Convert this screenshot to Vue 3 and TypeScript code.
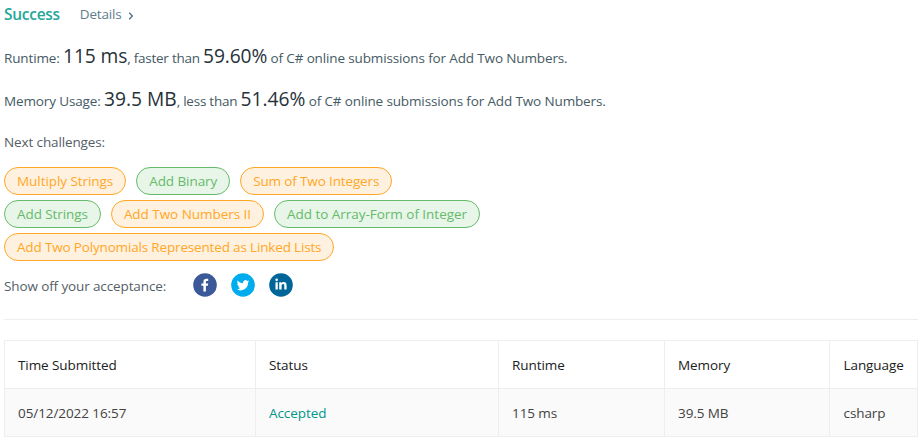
<script setup lang="ts">
interface Challenge {
  title: string
  level: 'medium' | 'easy'
  tracking: number
}

const challenges: Challenge[][] = [
  [
    { title: 'Multiply Strings', level: 'medium', tracking: -0.06 },
    { title: 'Add Binary', level: 'easy', tracking: -0.08 },
    { title: 'Sum of Two Integers', level: 'medium', tracking: -0.14 },
  ],
  [
    { title: 'Add Strings', level: 'easy', tracking: -0.08 },
    { title: 'Add Two Numbers II', level: 'medium', tracking: -0.04 },
    { title: 'Add to Array-Form of Integer', level: 'easy', tracking: -0.03 },
  ],
  [{ title: 'Add Two Polynomials Represented as Linked Lists', level: 'medium', tracking: -0.165 }],
]

const columns: string[] = ['Time Submitted', 'Status', 'Runtime', 'Memory', 'Language']
</script>

<template>
  <main class="result">
    <header class="head">
      <span class="success">Success</span>
      <a class="details">
        <span>Details</span>
        <svg class="chevron" viewBox="0 0 6 8"><path d="M1.2 0.8 4.4 4 1.2 7.2" /></svg>
      </a>
    </header>

    <p class="stat">
      <span class="label">Runtime: </span><span class="value">115 ms</span><span class="compare">, faster than </span><span class="value">59.60%</span><span class="tail"> of C# online submissions for Add Two Numbers.</span>
    </p>
    <p class="stat second">
      <span class="label">Memory Usage: </span><span class="value">39.5 MB</span><span class="compare">, less than </span><span class="value">51.46%</span><span class="tail"> of C# online submissions for Add Two Numbers.</span>
    </p>

    <p class="next">Next challenges:</p>
    <div class="pills">
      <div v-for="(row, i) in challenges" :key="i" class="pill-row">
        <a
          v-for="c in row"
          :key="c.title"
          class="pill"
          :class="c.level"
          :style="{ letterSpacing: c.tracking + 'px' }"
        >{{ c.title }}</a>
      </div>
    </div>

    <div class="share">
      <span class="share-label">Show off your acceptance:</span>
      <svg class="social" viewBox="0 0 24 24">
        <circle cx="12" cy="12" r="11.8" fill="#3b5998" />
        <path fill="#fff" d="M12.900 18.500v-5.800h2l.3-2.300h-2.300V9c0-.7.2-1.100 1.100-1.100h1.200V5.800c-.2 0-.9-.1-1.800-.1-1.800 0-3 1.100-3 3v1.700h-2v2.300h2v5.800z" />
      </svg>
      <svg class="social" viewBox="0 0 24 24">
        <circle cx="12" cy="12" r="11.8" fill="#00aced" />
        <path fill="#fff" d="M18.300 8.300c-.5.2-1 .4-1.500.4.5-.3.9-.8 1.100-1.400-.5.3-1 .5-1.600.6a2.600 2.600 0 0 0-4.400 2.300c-2.100-.1-4-1.100-5.300-2.700-.7 1.200-.3 2.700.8 3.400-.4 0-.8-.1-1.200-.3 0 1.300.9 2.300 2.100 2.600-.4.1-.8.1-1.200 0 .3 1 1.300 1.800 2.400 1.800A5.200 5.200 0 0 1 5.700 16.100a7.300 7.300 0 0 0 11.300-6.500c.5-.3.9-.8 1.300-1.300z" />
      </svg>
      <svg class="social" viewBox="0 0 24 24">
        <circle cx="12" cy="12" r="11.8" fill="#006699" />
        <path fill="#fff" d="M6.500 9.200h2.300v7.300H6.500zM7.650 5.500a1.350 1.350 0 1 1 0 2.700 1.350 1.350 0 0 1 0-2.700zM10.200 9.200h2.200v1c.4-.7 1.200-1.200 2.300-1.200 2.300 0 2.900 1.500 2.900 3.500v4h-2.300v-3.600c0-.9 0-1.900-1.200-1.900s-1.500.9-1.500 1.900v3.600h-2.400z" />
      </svg>
    </div>

    <hr class="rule" />

    <table class="table">
      <colgroup>
        <col class="c-time" /><col class="c-status" /><col class="c-runtime" /><col class="c-memory" /><col class="c-lang" />
      </colgroup>
      <thead>
        <tr><th v-for="name in columns" :key="name">{{ name }}</th></tr>
      </thead>
      <tbody>
        <tr>
          <td>05/12/2022 16:57</td>
          <td class="accepted">Accepted</td>
          <td>115 ms</td>
          <td>39.5 MB</td>
          <td>csharp</td>
        </tr>
      </tbody>
    </table>
  </main>
</template>

<style>
body {
  margin: 0;
  background: #fff;
}
</style>

<style scoped>
.result {
  box-sizing: border-box;
  height: 444px;
  padding: 0 6px 0 4px;
  overflow: hidden;
  font-family: 'Open Sans', 'Noto Sans', sans-serif;
  font-size: 13.5px;
  line-height: 20px;
  color: #546069;
  white-space: nowrap;
}
.head {
  display: flex;
  align-items: center;
  gap: 20px;
  height: 28px;
}
.success {
  font-size: 15.5px;
  font-weight: 600;
  letter-spacing: -0.28px;
  color: #26a69a;
}
.details {
  display: flex;
  align-items: center;
  gap: 8px;
  letter-spacing: -0.2px;
  color: #607d8b;
}
.chevron {
  width: 6px;
  height: 8px;
  margin: 3px 0 0 -1px;
  fill: none;
  stroke: #546e7a;
  stroke-width: 1.3;
}
.stat {
  margin: 13px 0 0;
  height: 29px;
  line-height: 29px;
  color: #455a64;
}
.stat.second {
  margin-top: 14px;
}
.label {
  letter-spacing: -0.13px;
}
.compare {
  letter-spacing: -0.24px;
}
.tail {
  letter-spacing: -0.135px;
}
.value {
  font-size: 19.2px;
  letter-spacing: -0.12px;
  color: #263238;
}
.second .value {
  letter-spacing: 0;
}
.next {
  margin: 19px 0 0;
  height: 20px;
  letter-spacing: -0.12px;
}
.pills {
  display: flex;
  flex-direction: column;
  gap: 5px;
  margin-top: 15px;
}
.pill-row {
  display: flex;
  gap: 10px;
}
.pill {
  box-sizing: border-box;
  height: 28px;
  padding: 0 12px;
  border: 1px solid;
  border-radius: 14px;
  line-height: 26px;
}
.medium {
  color: #ffa726;
  background: #fff1df;
}
.easy {
  color: #66bb6a;
  background: #e8f5e9;
}
.share {
  display: flex;
  align-items: center;
  gap: 14px;
  height: 24px;
  margin-top: 12px;
}
.share-label {
  width: 175px;
  padding-top: 2px;
  letter-spacing: -0.12px;
}
.social {
  width: 24px;
  height: 24px;
}
.rule {
  height: 1px;
  margin: 22px 0 20px;
  border: 0;
  background: #eee;
}
.table {
  width: 914px;
  table-layout: fixed;
  border-collapse: collapse;
  letter-spacing: -0.08px;
}
.c-time { width: 251px; }
.c-status { width: 243px; }
.c-runtime { width: 166px; }
.c-memory { width: 165px; }
.c-lang { width: 88px; }
th,
td {
  box-sizing: border-box;
  height: 48px;
  padding: 1px 0 0 13px;
  border: 1px solid #eee;
  text-align: left;
  font-weight: 400;
}
th:last-child,
td:last-child {
  padding-left: 13.5px;
}
th {
  color: #212121;
}
td {
  color: #424242;
  background: #fafafa;
}
td.accepted {
  color: #009688;
}
</style>
